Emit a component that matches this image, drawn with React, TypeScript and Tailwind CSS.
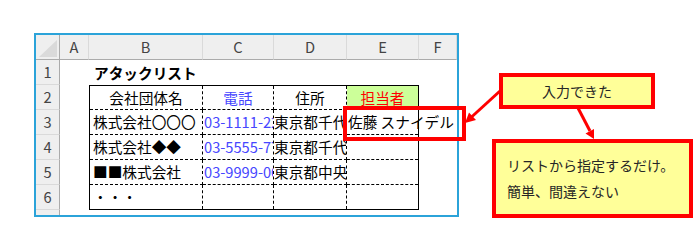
import React from 'react'

const FONT = "font-['Noto_Sans_CJK_JP','Noto_Sans',sans-serif]"

const colLetters = ['A', 'B', 'C', 'D', 'E', 'F']

// body rows of the bordered list (rows 2..6 on the sheet)
const rows = [
  { company: '会社団体名', tel: '電話', addr: '住所', person: '担当者', head: true },
  { company: '株式会社〇〇〇', tel: '03-1111-2222', addr: '東京都千代田区', person: '佐藤 スナイデル' },
  { company: '株式会社◆◆', tel: '03-5555-7777', addr: '東京都千代田区', person: '' },
  { company: '■■株式会社', tel: '03-9999-0000', addr: '東京都中央区', person: '' },
  { company: '・・・', tel: '', addr: '', person: '' },
]

function ListTable() {
  return (
    <div className="col-start-3 col-span-4 row-start-3 row-span-5 border border-black grid grid-cols-[113px_71px_73px_71px] grid-rows-[24px_25px_25px_25px_24px] text-[14.67px] text-black">
      {rows.map((r, i) => {
        const last = i === rows.length - 1
        const bottom = last ? '' : r.head ? 'border-b border-black' : 'border-b border-dashed border-black'
        return (
          <React.Fragment key={i}>
            <div className={`${bottom} border-r border-dashed border-black flex items-center whitespace-nowrap overflow-hidden ${r.head ? 'justify-center' : 'pl-[3px]'}`}>
              {r.company}
            </div>
            <div className={`${bottom} border-r border-dashed border-black flex items-center whitespace-nowrap overflow-hidden text-[#4646ff] ${r.head ? 'justify-center' : 'pl-[1px]'}`}>
              {r.tel}
            </div>
            <div className={`${bottom} border-r border-dashed border-black flex items-center whitespace-nowrap overflow-hidden ${r.head ? 'justify-center' : ''}`}>
              {r.addr}
            </div>
            <div className={`${bottom} flex items-center whitespace-nowrap ${r.head ? 'justify-center bg-[#ccff99] text-[#ff0000]' : 'pl-[1px]'}`}>
              {r.person}
            </div>
          </React.Fragment>
        )
      })}
    </div>
  )
}

function Sheet() {
  return (
    <div className="ml-[34px] mt-[33px] w-[425px] border-2 border-[#2ba3d9] bg-white">
      <div className="grid grid-cols-[24px_29px_114px_71px_73px_72px_38px] grid-rows-[25px_25px_25px_25px_25px_25px_25px_5px] text-[#444]">
        {/* corner */}
        <div className="bg-[#efefef] border-r border-b border-[#ababab] flex items-end justify-end pr-[2px] pb-[2px]">
          <svg width="18" height="17" viewBox="0 0 18 17">
            <polygon points="0,17 18,17 18,0" fill="#dadada" />
          </svg>
        </div>
        {colLetters.map((c) => (
          <div key={c} className="bg-[#efefef] border-b border-[#ababab] border-r border-r-[#dadada] flex items-center justify-center text-[14.67px] last:border-r-0">
            {c}
          </div>
        ))}
        {[1, 2, 3, 4, 5, 6].map((n) => (
          <div key={n} style={{ gridRow: n + 1 }} className="col-start-1 bg-[#efefef] border-r border-[#ababab] border-b border-b-[#dadada] flex items-center justify-center text-[14.67px]">
            {n}
          </div>
        ))}
        <div className="col-start-1 row-start-8 bg-[#efefef] border-r border-[#ababab]" />

        <div className="col-start-3 row-start-2 flex items-center pl-[5px] font-bold text-black text-[14.67px] whitespace-nowrap">
          アタックリスト
        </div>

        <ListTable />
      </div>
    </div>
  )
}

export default function App() {
  return (
    <div className={`relative w-[700px] h-[252px] bg-white overflow-hidden ${FONT}`}>
      <Sheet />

      {/* highlight on the entered name */}
      <div className="absolute left-[343px] top-[106px] w-[123px] h-[35px] border-4 border-[#ff0000]" />

      <svg className="absolute inset-0 pointer-events-none" width="700" height="252">
        <line x1="500" y1="91" x2="471" y2="117.5" stroke="#ff0000" strokeWidth="3" />
        <polygon points="465,123 476,120 469,112.5" fill="#ff0000" />
        <line x1="578" y1="108" x2="590" y2="131" stroke="#ff0000" strokeWidth="3" />
        <polygon points="594,139 585.5,133.5 594,129" fill="#ff0000" />
      </svg>

      <div className="absolute left-[499px] top-[73px] w-[156px] h-[36px] border-4 border-[#ff0000] bg-[#ffff99] flex items-center justify-center text-[14px] text-[#262626]">
        入力できた
      </div>

      <div className="absolute left-[492px] top-[139px] w-[201px] h-[79px] border-4 border-[#ff0000] bg-[#ffff99] pl-[11px] pt-[9px] text-[14px] leading-[26px] text-[#262626]">
        <div>リストから指定するだけ。</div>
        <div>簡単、間違えない</div>
      </div>
    </div>
  )
}
